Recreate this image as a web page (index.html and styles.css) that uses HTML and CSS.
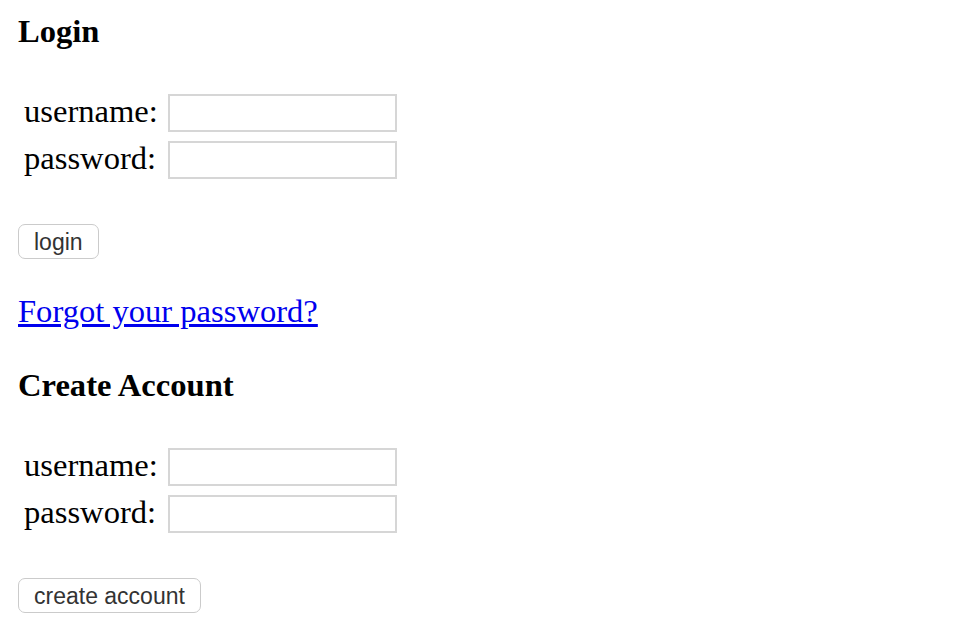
FILE: index.html
```html
<!DOCTYPE html>
<html lang="en">
<head>
<meta charset="utf-8">
<title>Login</title>
<link rel="stylesheet" href="styles.css">
</head>
<body>
<main class="page">
  <section class="block">
    <h3 class="title">Login</h3>
    <form class="fields">
      <label class="label" for="lu">username:</label>
      <input class="field" id="lu" type="text">
      <label class="label" for="lp">password:</label>
      <input class="field" id="lp" type="password">
    </form>
    <div class="actions"><button class="btn" type="button">login</button></div>
    <p class="forgot"><a class="link" href="#">Forgot your password?</a></p>
  </section>
  <section class="block">
    <h3 class="title title-second">Create Account</h3>
    <form class="fields">
      <label class="label" for="cu">username:</label>
      <input class="field" id="cu" type="text">
      <label class="label" for="cp">password:</label>
      <input class="field" id="cp" type="password">
    </form>
    <div class="actions"><button class="btn" type="button">create account</button></div>
  </section>
</main>
</body>
</html>
```

FILE: styles.css
```css
html, body {
  margin: 0;
  padding: 0;
  background: #ffffff;
}

.page {
  padding: 12px 18px 0 18px;
  font-family: "Liberation Serif", "Times New Roman", serif;
  font-size: 32.6px;
  color: #000;
}

.title {
  margin: 0;
  font-size: 32.6px;
  font-weight: bold;
  line-height: 38px;
}

.title-second {
  margin-top: 36px;
}

.fields {
  margin: 44px 0 0 0;
  padding-left: 6px;
  display: grid;
  grid-template-columns: max-content 229px;
  column-gap: 10px;
  row-gap: 9px;
  align-items: start;
}

.label {
  line-height: 34px;
  white-space: nowrap;
}

.field {
  box-sizing: border-box;
  width: 229px;
  height: 38px;
  margin: 0;
  border: 2px solid #d6d6d6;
  border-radius: 0;
  background: #fff;
  outline: none;
}

.actions {
  margin-top: 45px;
  line-height: 0;
}

.btn {
  box-sizing: border-box;
  margin: 0;
  padding: 3px 15px;
  height: 35px;
  font-family: "Liberation Sans", Arial, sans-serif;
  font-size: 23px;
  line-height: 26px;
  color: #333333;
  background: #fff;
  border: 1.5px solid #cbcbcb;
  border-radius: 7px;
}

.forgot {
  margin: 33px 0 0 0;
  line-height: 38px;
}

.link {
  color: #0000ee;
  text-decoration: underline;
}
```
